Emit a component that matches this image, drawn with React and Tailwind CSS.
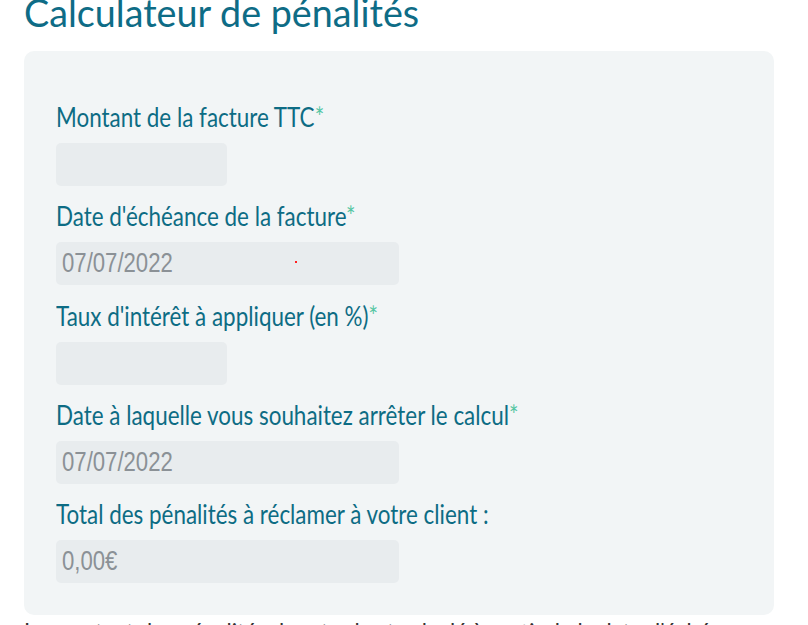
import React from "react";

const lato = { fontFamily: '"Lato", "Noto Sans", sans-serif' };

function Label({ children, required }) {
  return (
    <div className="h-[36px] leading-[36px] text-[27px] text-[#0d6c84] whitespace-nowrap" style={lato}>
      <span className="inline-block origin-left scale-x-[0.83]">
        {children}
        {required && <span className="text-[#55c6a3]">*</span>}
      </span>
    </div>
  );
}

function Field({ wide, value, dot }) {
  return (
    <div
      className={`relative mt-[8px] h-[43px] rounded-[5px] bg-[#e8ecee] pl-[6px] flex items-center ${wide ? "w-[343px]" : "w-[171px]"}`}
    >
      {value && (
        <span
          className="inline-block origin-left scale-x-[0.82] text-[27px] leading-none text-[#8b9196] whitespace-nowrap"
          style={{ fontFamily: '"Liberation Sans", Arial, sans-serif' }}
        >
          {value}
        </span>
      )}
      {dot && <span className="absolute left-[239px] top-[19px] w-[2px] h-[2px] bg-[#ff2020]" />}
    </div>
  );
}

export default function App() {
  return (
    <div className="w-[808px] h-[625px] overflow-hidden bg-white pl-[24px]">
      <h1 className="h-[28px] leading-[26px] text-[37.7px] text-[#0e6c86] font-normal whitespace-nowrap" style={lato}>
        Calculateur de pénalités
      </h1>
      <div className="mt-[23px] w-[750px] rounded-[10px] bg-[#f2f5f6] pl-[32px] pt-[48px] pb-[32px] flex flex-col gap-[12.25px]">
        <div>
          <Label required>Montant de la facture TTC</Label>
          <Field />
        </div>
        <div>
          <Label required>Date d'échéance de la facture</Label>
          <Field wide value="07/07/2022" dot />
        </div>
        <div>
          <Label required>Taux d'intérêt à appliquer (en %)</Label>
          <Field />
        </div>
        <div>
          <Label required>Date à laquelle vous souhaitez arrêter le calcul</Label>
          <Field wide value="07/07/2022" />
        </div>
        <div>
          <Label>Total des pénalités à réclamer à votre client :</Label>
          <Field wide value="0,00€" />
        </div>
      </div>
      <p className="leading-[36px] text-[27px] text-[#333333] whitespace-nowrap" style={lato}>
        <span className="inline-block origin-left scale-x-[0.82]">
          Le montant des pénalités de retard est calculé à partir de la date d'échéance.
        </span>
      </p>
    </div>
  );
}
